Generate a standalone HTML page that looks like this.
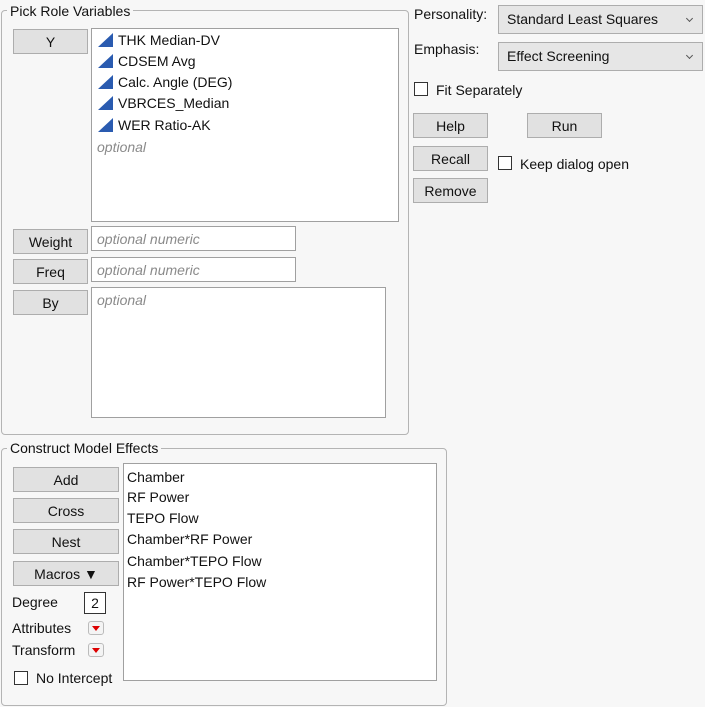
<!DOCTYPE html>
<html><head><style>
*{box-sizing:border-box;margin:0;padding:0}
body{width:705px;height:707px;background:#f7f7f7;font-family:"Liberation Sans",sans-serif;font-size:14px;color:#111;position:relative;overflow:hidden}
div,span{position:absolute}
.frame{border:1px solid #b4b4b4;border-radius:4px}
.leg{background:#f7f7f7;padding:0 3px;line-height:16px;white-space:nowrap}
.btn{background:#e1e1e1;border:1px solid #adadad;text-align:center;line-height:24px;white-space:nowrap}
.box{background:#fff;border:1px solid #a0a0a0}
.t{white-space:nowrap;line-height:16px}
.opt{color:#8a8a8a;font-style:italic}
.cb{width:14px;height:14px;background:#fff;border:1px solid #333}
.tri{width:0;height:0;border-left:15px solid transparent;border-bottom:14px solid #2a5bb0}
.dd{background:#e6e6e6;border:1px solid #adadad;line-height:27px;padding-left:8px}
.car{right:10px;top:10px;width:5px;height:5px;border-right:1.3px solid #555;border-bottom:1.3px solid #555;transform:rotate(45deg)}
.red{width:16px;height:14px;border:1px solid #bbb;border-radius:3px;background:#f4f4f4}
.red:after{content:"";position:absolute;left:3px;top:4px;border-left:4px solid transparent;border-right:4px solid transparent;border-top:5px solid #d00}
</style></head><body>
<div class="frame" style="left:1px;top:10px;width:408px;height:425px"></div>
<div class="leg" style="left:7px;top:3px">Pick Role Variables</div>
<div class="btn" style="left:13px;top:29px;width:75px;height:25px">Y</div>
<div class="box" style="left:91px;top:28px;width:308px;height:194px"></div>
<div class="tri" style="left:98px;top:33px"></div><div class="t" style="left:118px;top:32px">THK Median-DV</div>
<div class="tri" style="left:98px;top:54px"></div><div class="t" style="left:118px;top:53px">CDSEM Avg</div>
<div class="tri" style="left:98px;top:75px"></div><div class="t" style="left:118px;top:74px">Calc. Angle (DEG)</div>
<div class="tri" style="left:98px;top:96px"></div><div class="t" style="left:118px;top:95px">VBRCES_Median</div>
<div class="tri" style="left:98px;top:118px"></div><div class="t" style="left:118px;top:117px">WER Ratio-AK</div>
<div class="t opt" style="left:97px;top:139px">optional</div>
<div class="btn" style="left:13px;top:229px;width:75px;height:25px">Weight</div>
<div class="box" style="left:91px;top:226px;width:205px;height:25px"></div>
<div class="t opt" style="left:97px;top:231px">optional numeric</div>
<div class="btn" style="left:13px;top:259px;width:75px;height:25px">Freq</div>
<div class="box" style="left:91px;top:257px;width:205px;height:25px"></div>
<div class="t opt" style="left:97px;top:262px">optional numeric</div>
<div class="btn" style="left:13px;top:290px;width:75px;height:25px">By</div>
<div class="box" style="left:91px;top:287px;width:295px;height:131px"></div>
<div class="t opt" style="left:97px;top:292px">optional</div>

<div class="t" style="left:414px;top:6px">Personality:</div>
<div class="dd" style="left:498px;top:5px;width:205px;height:29px">Standard Least Squares<span class="car"></span></div>
<div class="t" style="left:414px;top:41px">Emphasis:</div>
<div class="dd" style="left:498px;top:42px;width:205px;height:29px">Effect Screening<span class="car"></span></div>
<div class="cb" style="left:414px;top:82px"></div><div class="t" style="left:436px;top:82px">Fit Separately</div>
<div class="btn" style="left:413px;top:113px;width:75px;height:25px">Help</div>
<div class="btn" style="left:527px;top:113px;width:75px;height:25px">Run</div>
<div class="btn" style="left:413px;top:146px;width:75px;height:25px">Recall</div>
<div class="cb" style="left:498px;top:156px"></div><div class="t" style="left:520px;top:156px">Keep dialog open</div>
<div class="btn" style="left:413px;top:178px;width:75px;height:25px">Remove</div>

<div class="frame" style="left:1px;top:448px;width:446px;height:258px"></div>
<div class="leg" style="left:7px;top:440px">Construct Model Effects</div>
<div class="btn" style="left:13px;top:467px;width:106px;height:25px">Add</div>
<div class="btn" style="left:13px;top:498px;width:106px;height:25px">Cross</div>
<div class="btn" style="left:13px;top:529px;width:106px;height:25px">Nest</div>
<div class="btn" style="left:13px;top:561px;width:106px;height:25px">Macros &#9660;</div>
<div class="box" style="left:123px;top:463px;width:314px;height:218px"></div>
<div class="t" style="left:127px;top:469px">Chamber</div>
<div class="t" style="left:127px;top:489px">RF Power</div>
<div class="t" style="left:127px;top:510px">TEPO Flow</div>
<div class="t" style="left:127px;top:531px">Chamber*RF Power</div>
<div class="t" style="left:127px;top:553px">Chamber*TEPO Flow</div>
<div class="t" style="left:127px;top:574px">RF Power*TEPO Flow</div>
<div class="t" style="left:12px;top:594px">Degree</div>
<div style="left:84px;top:592px;width:22px;height:22px;background:#fff;border:1px solid #333;text-align:center;line-height:20px">2</div>
<div class="t" style="left:12px;top:620px">Attributes</div><div class="red" style="left:88px;top:621px"></div>
<div class="t" style="left:12px;top:642px">Transform</div><div class="red" style="left:88px;top:643px"></div>
<div class="cb" style="left:14px;top:671px"></div><div class="t" style="left:36px;top:670px">No Intercept</div>
</body></html>
